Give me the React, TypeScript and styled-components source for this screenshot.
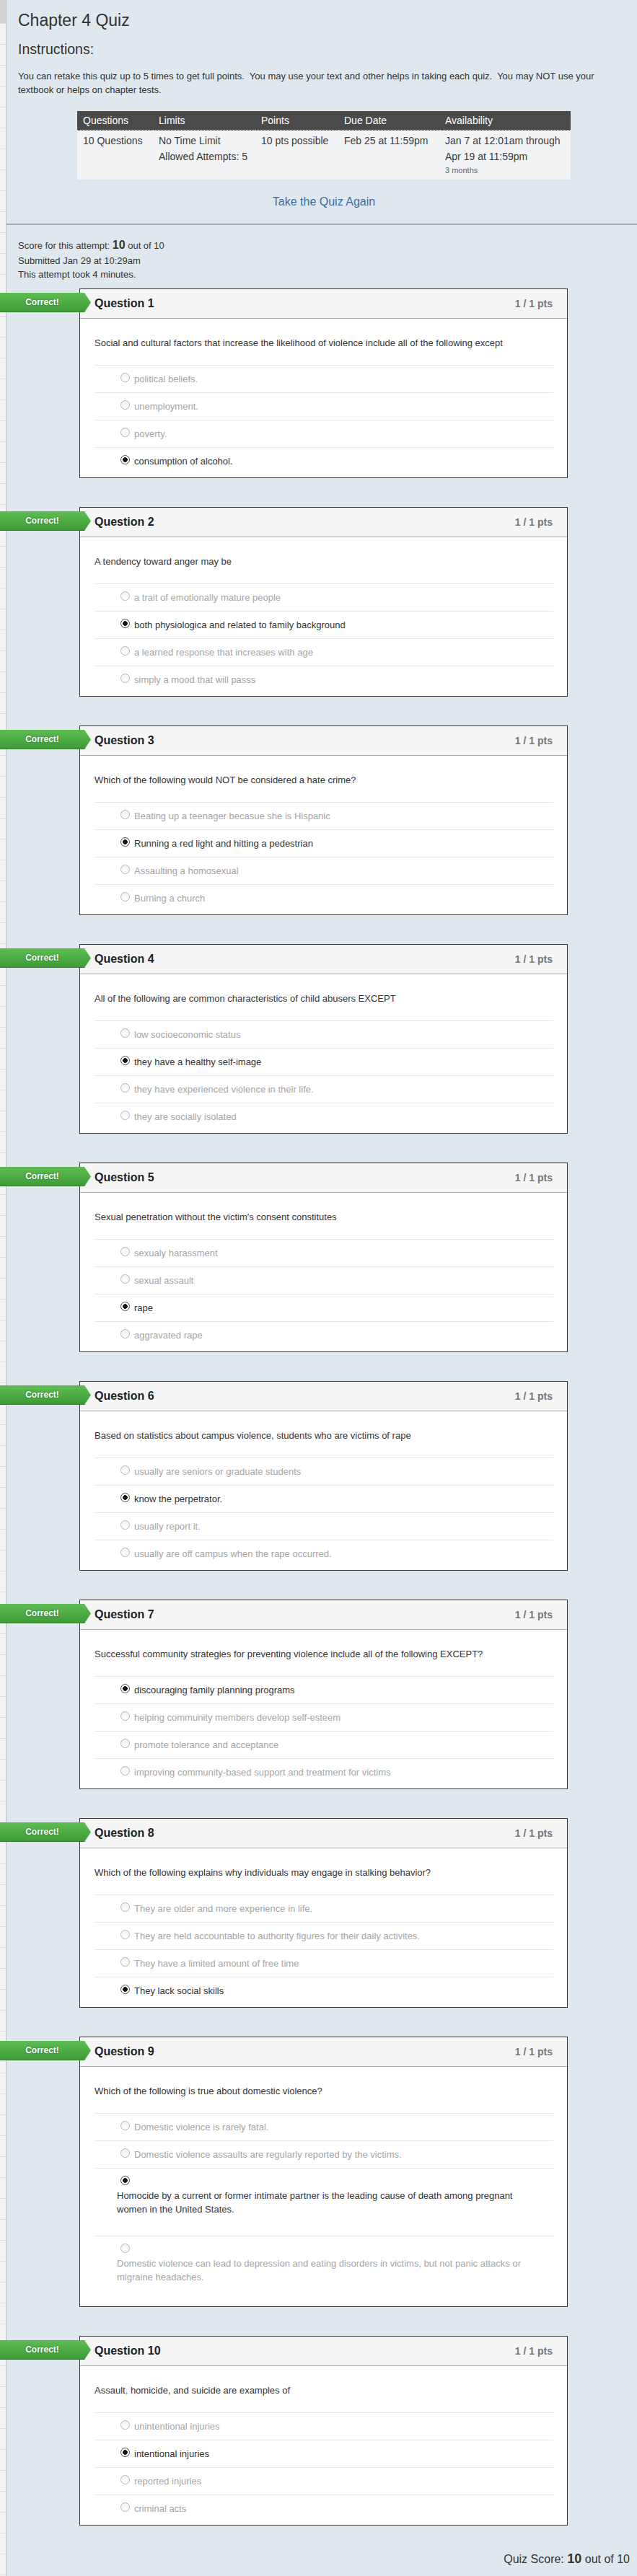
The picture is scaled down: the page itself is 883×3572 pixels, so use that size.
import React from 'react';
import styled, { createGlobalStyle } from 'styled-components';

interface Answer {
  text: React.ReactNode;
  picked?: boolean;
  stacked?: boolean;
}

interface Question {
  prompt: React.ReactNode;
  answers: Answer[];
}

const GlobalStyle = createGlobalStyle`
  html, body {
    margin: 0;
    padding: 0;
    background: #dfe8ee;
  }
  body {
    font-family: "Liberation Sans", Arial, sans-serif;
    color: #333;
  }
`;

const Page = styled.div`
  display: flex;
  min-height: 3572px;
`;

const Rail = styled.div`
  flex: 0 0 8px;
  border-right: 1px solid #c2c2c2;
  background:
    linear-gradient(#d3d3d3, #d3d3d3) top left / 100% 32px no-repeat,
    repeating-linear-gradient(to bottom, #f4f4f4 0 28px, #dedede 28px 29px) 0 4px;
`;

const Main = styled.div`
  flex: 1;
  min-width: 0;
`;

const TopSection = styled.section`
  padding: 14px 10px 20px 16px;
  border-bottom: 2px solid #acacac;
`;

const Title = styled.h1`
  margin: 0;
  font-size: 23px;
  line-height: 28px;
  font-weight: normal;
  color: #333;
`;

const Subtitle = styled.h2`
  margin: 14px 0 0;
  font-size: 19.5px;
  line-height: 24px;
  font-weight: normal;
  color: #333;
`;

const Intro = styled.p`
  margin: 16px 0 0;
  font-size: 13px;
  line-height: 19px;
  color: #333;
`;

const InfoTable = styled.table`
  margin: 20px auto 0;
  width: 684px;
  border-collapse: separate;
  border-spacing: 0;
  font-size: 14px;
  table-layout: fixed;
`;

const Th = styled.th<{ $w: number }>`
  width: ${p => p.$w}px;
  box-sizing: border-box;
  height: 26px;
  padding: 0 8px;
  line-height: 26px;
  text-align: left;
  font-weight: normal;
  color: #fff;
  background: #4a4a4a;
  border-bottom: 1px dotted #b5b5b5;
`;

const Td = styled.td`
  padding: 3px 8px 5px;
  line-height: 22px;
  vertical-align: top;
  color: #3a3a3a;
  background: #f1f3f4;
  white-space: nowrap;
`;

const Small = styled.div`
  font-size: 11px;
  line-height: 16px;
  color: #666;
`;

const RetakeLink = styled.a`
  display: block;
  margin-top: 21px;
  text-align: center;
  font-size: 16px;
  line-height: 20px;
  color: #3d6ea3;
  text-decoration: none;
`;

const Results = styled.section`
  padding: 0 10px 0 16px;
`;

const Summary = styled.div`
  padding-top: 18px;
  margin-bottom: 10px;
  font-size: 13px;
  color: #333;
`;

const SummaryLine = styled.div<{ $first?: boolean }>`
  line-height: 19px;
  margin-bottom: ${p => (p.$first ? '2px' : '0')};
`;

const Strong = styled.strong`
  font-size: 16px;
`;

const Card = styled.div`
  position: relative;
  width: 677px;
  box-sizing: border-box;
  margin-left: 85px;
  border: 1px solid #363636;
  background: #fff;

  & + & {
    margin-top: 40px;
  }
`;

const Ribbon = styled.div`
  position: absolute;
  top: 5px;
  left: -111px;
  width: 126px;
  height: 27px;
  padding-right: 9px;
  box-sizing: border-box;
  clip-path: polygon(0 0, 117px 0, 126px 50%, 117px 100%, 0 100%);
  background: linear-gradient(to bottom, #5dbd52, #3d9a37);
  box-shadow: inset 0 -1px 0 #2f7d2b;
  color: #fff;
  font-size: 12px;
  font-weight: bold;
  line-height: 27px;
  text-align: center;
  text-shadow: 0 0 2px rgba(20, 70, 20, 0.7);
`;

const CardHeader = styled.div`
  display: flex;
  justify-content: space-between;
  height: 40px;
  line-height: 40px;
  padding: 0 20px;
  background: #f5f5f5;
  border-bottom: 1px solid #a9a9a9;
`;

const QuestionName = styled.span`
  font-size: 16px;
  font-weight: bold;
  color: #222;
`;

const Points = styled.span`
  font-size: 14px;
  font-weight: bold;
  color: #777;
`;

const CardBody = styled.div`
  padding: 0 19px 4px 20px;
`;

const Prompt = styled.div`
  padding-top: 24px;
  margin-bottom: 21px;
  font-size: 13px;
  line-height: 19px;
  color: #333;
`;

const Tinted = styled.span`
  color: #4a78b0;
`;

const AnswerRow = styled.div<{ $picked: boolean; $stacked: boolean }>`
  border-top: 1px solid #e6e6e6;
  padding: 9px 0 ${p => (p.$stacked ? '27px' : '9px')} 31px;
  font-size: 13px;
  line-height: 19px;
  color: ${p => (p.$picked ? '#333' : '#a5a5a5')};
`;

const Radio = styled.span<{ $picked: boolean }>`
  display: inline-block;
  box-sizing: border-box;
  width: 13px;
  height: 13px;
  margin: 0 3px 0 5px;
  border-radius: 50%;
  border: 1px solid ${p => (p.$picked ? '#4a4a4a' : '#b3b3b3')};
  background: ${p =>
    p.$picked
      ? 'radial-gradient(circle, #111 0 3px, #fff 3.6px)'
      : 'linear-gradient(#f2f2f2, #fff)'};
`;

const AnswerText = styled.span<{ $stacked: boolean }>`
  display: ${p => (p.$stacked ? 'block' : 'inline-block')};
  margin-left: ${p => (p.$stacked ? '0' : '3px')};
  max-width: 570px;
`;

const FinalScore = styled.div`
  margin-top: 34px;
  text-align: right;
  font-size: 16px;
  line-height: 24px;
  color: #333;
`;

const BigStrong = styled.strong`
  font-size: 18px;
`;

const introText =
  'You can retake this quiz up to 5 times to get full points.\u00a0 You may use your text and other helps in taking each quiz.\u00a0 You may NOT use your textbook or helps on chapter tests.';

const questions: Question[] = [
  {
    prompt: 'Social and cultural factors that increase the likelihood of violence include all of the following except',
    answers: [
      { text: 'political beliefs.' },
      { text: 'unemployment.' },
      { text: 'poverty.' },
      { text: 'consumption of alcohol.', picked: true }
    ]
  },
  {
    prompt: 'A tendency toward anger may be',
    answers: [
      { text: 'a trait of emotionally mature people' },
      { text: 'both physiologica and related to family background', picked: true },
      { text: 'a learned response that increases with age' },
      { text: 'simply a mood that will passs' }
    ]
  },
  {
    prompt: 'Which of the following would NOT be considered a hate crime?',
    answers: [
      { text: 'Beating up a teenager becasue she is Hispanic' },
      { text: 'Running a red light and hitting a pedestrian', picked: true },
      { text: 'Assaulting a homosexual' },
      { text: 'Burning a church' }
    ]
  },
  {
    prompt: 'All of the following are common characteristics of child abusers EXCEPT',
    answers: [
      { text: 'low socioeconomic status' },
      { text: 'they have a healthy self-image', picked: true },
      { text: 'they have experienced violence in their life.' },
      { text: 'they are socially isolated' }
    ]
  },
  {
    prompt: "Sexual penetration without the victim's consent constitutes",
    answers: [
      { text: 'sexualy harassment' },
      { text: 'sexual assault' },
      { text: 'rape', picked: true },
      { text: 'aggravated rape' }
    ]
  },
  {
    prompt: 'Based on statistics about campus violence, students who are victims of rape',
    answers: [
      { text: 'usually are seniors or graduate students' },
      { text: 'know the perpetrator.', picked: true },
      { text: 'usually report it.' },
      { text: 'usually are off campus when the rape occurred.' }
    ]
  },
  {
    prompt: 'Successful community strategies for preventing violence include all of the following EXCEPT?',
    answers: [
      { text: 'discouraging family planning programs', picked: true },
      { text: 'helping community members develop self-esteem' },
      { text: 'promote tolerance and acceptance' },
      { text: 'improving community-based support and treatment for victims' }
    ]
  },
  {
    prompt: 'Which of the following explains why individuals may engage in stalking behavior?',
    answers: [
      { text: 'They are older and more experience in life.' },
      { text: 'They are held accountable to authority figures for their daily activites.' },
      { text: 'They have a limited amount of free time' },
      { text: 'They lack social skills', picked: true }
    ]
  },
  {
    prompt: 'Which of the following is true about domestic violence?',
    answers: [
      { text: 'Domestic violence is rarely fatal.' },
      { text: 'Domestic violence assaults are regularly reported by the victims.' },
      {
        text: 'Homocide by a current or former intimate partner is the leading cause of death among pregnant women in the United States.',
        picked: true,
        stacked: true
      },
      {
        text: 'Domestic violence can lead to depression and eating disorders in victims, but not panic attacks or migraine headaches.',
        stacked: true
      }
    ]
  },
  {
    prompt: (
      <>
        Assault<Tinted>,</Tinted> homicide, and suicide are examples of
      </>
    ),
    answers: [
      { text: 'unintentional injuries' },
      { text: 'intentional injuries', picked: true },
      { text: 'reported injuries' },
      { text: 'criminal acts' }
    ]
  }
];

const App: React.FC = () => {
  return (
    <>
      <GlobalStyle />
      <Page>
        <Rail />
        <Main>
          <TopSection>
            <Title>Chapter 4 Quiz</Title>
            <Subtitle>Instructions:</Subtitle>
            <Intro>{introText}</Intro>
            <InfoTable>
              <thead>
                <tr>
                  <Th $w={105}>Questions</Th>
                  <Th $w={142}>Limits</Th>
                  <Th $w={115}>Points</Th>
                  <Th $w={140}>Due Date</Th>
                  <Th $w={182}>Availability</Th>
                </tr>
              </thead>
              <tbody>
                <tr>
                  <Td>10 Questions</Td>
                  <Td>
                    No Time Limit
                    <br />
                    Allowed Attempts: 5
                  </Td>
                  <Td>10 pts possible</Td>
                  <Td>Feb 25 at 11:59pm</Td>
                  <Td>
                    Jan 7 at 12:01am through
                    <br />
                    Apr 19 at 11:59pm
                    <Small>3 months</Small>
                  </Td>
                </tr>
              </tbody>
            </InfoTable>
            <RetakeLink href="#">Take the Quiz Again</RetakeLink>
          </TopSection>

          <Results>
            <Summary>
              <SummaryLine $first>
                Score for this attempt: <Strong>10</Strong> out of 10
              </SummaryLine>
              <SummaryLine>Submitted Jan 29 at 10:29am</SummaryLine>
              <SummaryLine>This attempt took 4 minutes.</SummaryLine>
            </Summary>

            {questions.map((q, index) => (
              <Card key={index}>
                <Ribbon>Correct!</Ribbon>
                <CardHeader>
                  <QuestionName>Question {index + 1}</QuestionName>
                  <Points>1 / 1 pts</Points>
                </CardHeader>
                <CardBody>
                  <Prompt>{q.prompt}</Prompt>
                  {q.answers.map((a, i) => (
                    <AnswerRow key={i} $picked={!!a.picked} $stacked={!!a.stacked}>
                      <Radio $picked={!!a.picked} />
                      <AnswerText $stacked={!!a.stacked}>{a.text}</AnswerText>
                    </AnswerRow>
                  ))}
                </CardBody>
              </Card>
            ))}

            <FinalScore>
              Quiz Score: <BigStrong>10</BigStrong> out of 10
            </FinalScore>
          </Results>
        </Main>
      </Page>
    </>
  );
};

export default App;
